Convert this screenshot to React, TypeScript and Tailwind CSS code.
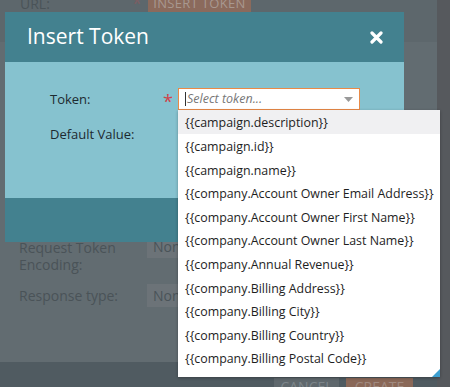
const tokens = [
  "{{campaign.description}}",
  "{{campaign.id}}",
  "{{campaign.name}}",
  "{{company.Account Owner Email Address}}",
  "{{company.Account Owner First Name}}",
  "{{company.Account Owner Last Name}}",
  "{{company.Annual Revenue}}",
  "{{company.Billing Address}}",
  "{{company.Billing City}}",
  "{{company.Billing Country}}",
  "{{company.Billing Postal Code}}",
  "{{company.Billing State}}",
];

function CloseIcon() {
  return (
    <svg width="13" height="13" viewBox="0 0 13 13">
      <path d="M2 2 L11 11 M11 2 L2 11" stroke="#fff" strokeWidth="3.2" strokeLinecap="round" />
    </svg>
  );
}

export default function App() {
  return (
    <div className="relative w-[450px] h-[387px] overflow-hidden bg-[#626c71] font-['Open_Sans',sans-serif] flex">
      {/* Page behind the dialog (dimmed) */}
      <div className="w-[437px] h-full flex flex-col">
        <div className="h-[42px] bg-[#5d676c]">
          <div className="-mt-[6px] h-[18px] flex items-center">
            <span className="pl-[20px] w-[132px] text-[14px] text-[#4a5358]">URL:</span>
            <span className="w-[16px] text-[18px] leading-none text-[#7b5e63]">*</span>
            <span className="h-[18px] w-[103px] bg-[#8b6a5c] flex items-center justify-center text-[13px] text-[#a89890] tracking-wide pt-[2px]">
              INSERT TOKEN
            </span>
          </div>
        </div>
        <div className="h-[193px]" />
        <div className="flex h-[36px]">
          <div className="pl-[19px] w-[147px] pt-[4px] text-[14px] leading-[17px] text-[#4a5358]">
            <div>Request Token</div>
            <div>Encoding:</div>
          </div>
          <div className="h-[23px] w-[260px] bg-[#6c7378] text-[14px] text-[#4a5358] pl-[6px] flex items-center">None</div>
        </div>
        <div className="h-[13px]" />
        <div className="flex h-[23px] items-center">
          <div className="pl-[19px] w-[147px] text-[14px] text-[#4a5358]">Response type:</div>
          <div className="h-[23px] w-[260px] bg-[#6c7378] text-[14px] text-[#4a5358] pl-[6px] flex items-center">None</div>
        </div>
        <div className="flex-1" />
        <div className="h-[25px] bg-[#505b61] flex items-end">
          <div className="ml-[274px] w-[65px] h-[9px] bg-[#5f686d] overflow-hidden flex justify-center">
            <span className="text-[14px] leading-[18px] text-[#7c858a]">CANCEL</span>
          </div>
          <div className="ml-[7px] w-[67px] h-[9px] bg-[#8a6858] overflow-hidden flex justify-center">
            <span className="text-[14px] leading-[18px] text-[#a08a80]">CREATE</span>
          </div>
        </div>
      </div>
      <div className="w-[13px] h-full bg-[#56595d]" />

      {/* Dialog */}
      <div className="absolute left-[5px] top-[12px] w-[399px] flex flex-col">
        <div className="h-[50px] bg-[#43818f] flex items-center justify-between pl-[22px] pr-[21px]">
          <span className="text-[21px] text-white">Insert Token</span>
          <CloseIcon />
        </div>
        <div className="h-[136px] bg-[#86c2cf] pt-[76px]">
          <div className="absolute left-[45px] top-[76px] flex items-center h-[22px]">
            <span className="w-[113px] text-[13px] text-[#1d2a30] pt-[2px]">Token:</span>
            <span className="w-[15px] text-[18px] leading-none text-[#d1434a] pt-[4px]">*</span>
            <div className="w-[182px] h-[22px] bg-white border border-[#e98a47] flex items-center pl-[6px] pr-[6px]">
              <span className="w-px h-[14px] bg-[#333]" />
              <span className="flex-1 text-[12.5px] italic text-[#777] pl-px pt-px">Select token...</span>
              <svg width="9" height="5" viewBox="0 0 9 5">
                <path d="M0 0 L9 0 L4.5 5 Z" fill="#999" />
              </svg>
            </div>
          </div>
          <div className="absolute left-[45px] top-[113px] text-[13px] text-[#1d2a30]">Default Value:</div>
        </div>
        <div className="h-[44px] bg-[#43818f]" />
      </div>

      {/* Token list */}
      <div className="absolute left-[178px] top-[110px] w-[262px] h-[267px] bg-white overflow-hidden shadow-[0_1px_3px_rgba(0,0,0,0.3)]">
        {tokens.map((t, i) => (
          <div
            key={t}
            className={`h-[23.6px] flex items-center pl-[7px] pt-[4px] text-[12.4px] text-[#1e1e1e] whitespace-nowrap ${
              i === 0 ? "bg-[#f0f0f2]" : ""
            }`}
          >
            {t}
          </div>
        ))}
        <svg className="absolute right-0 bottom-0" width="8" height="8" viewBox="0 0 8 8">
          <path d="M8 0 L8 8 L0 8 Z" fill="#3d9fd0" />
        </svg>
      </div>
    </div>
  );
}
